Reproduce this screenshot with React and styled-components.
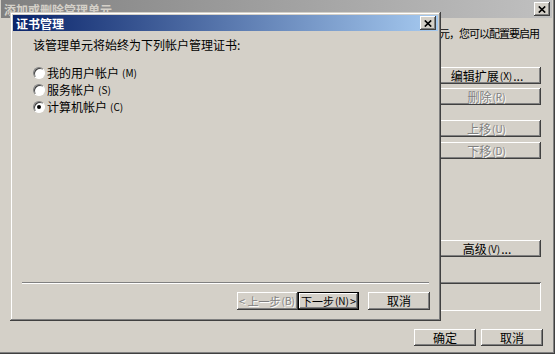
import React from 'react';
import styled, { createGlobalStyle, css } from 'styled-components';

const GlobalStyle = createGlobalStyle`
  html, body {
    margin: 0;
    padding: 0;
    background: #fff;
  }
  body {
    font-family: "Noto Sans CJK SC", "Liberation Sans", sans-serif;
    font-size: 12px;
    color: #000;
  }
`;

const frameEdge = css`
  box-shadow: inset -1px -1px #404040, inset 1px 1px #d4d0c8,
    inset -2px -2px #808080, inset 2px 2px #fff;
`;
const buttonEdge = css`
  box-shadow: inset -1px -1px #404040, inset 1px 1px #fff,
    inset -2px -2px #808080, inset 2px 2px #d4d0c8;
`;
const sunkenEdge = css`
  box-shadow: inset 1px 1px #808080, inset -1px -1px #fff,
    inset 2px 2px #404040, inset -2px -2px #d4d0c8;
`;

const Desktop = styled.div`
  position: relative;
  width: 557px;
  height: 357px;
  overflow: hidden;
`;

const Window = styled.div`
  position: absolute;
  left: ${({ $x }) => $x}px;
  top: ${({ $y }) => $y}px;
  width: ${({ $w }) => $w}px;
  height: ${({ $h }) => $h}px;
  box-sizing: border-box;
  padding: 3px;
  background: #d4d0c8;
  display: flex;
  flex-direction: column;
  ${frameEdge}
`;

const TitleBar = styled.div`
  height: ${({ $h }) => $h}px;
  flex: none;
  display: flex;
  align-items: center;
  padding: 0 2px 0 3px;
  font-weight: bold;
  font-size: 12px;
  ${({ $active }) =>
    $active
      ? css`
          background: linear-gradient(to right, #0a246a, #a6caf0);
          color: #fff;
        `
      : css`
          background: linear-gradient(to right, #808080, #c0c0c0);
          color: #d4d0c8;
        `}
`;

const TitleText = styled.div`
  flex: 1;
  white-space: nowrap;
  line-height: 13px;
`;

const CloseButton = styled.div`
  width: 16px;
  height: 14px;
  background: #d4d0c8;
  display: flex;
  align-items: center;
  justify-content: center;
  ${buttonEdge}
`;

const CloseGlyph = () => (
  <svg width="8" height="7" viewBox="0 0 8 7">
    <path d="M0.8 0.5 L7.2 6.5 M7.2 0.5 L0.8 6.5" stroke="#000" strokeWidth="1.7" fill="none" />
  </svg>
);

/* mnemonic such as (M): drawn smaller than the Chinese label */
const Key = styled.span`
  font-size: 10px;
  margin: 0 1px;
`;

const Button = styled.div`
  width: ${({ $w }) => $w}px;
  height: ${({ $h }) => $h || 18}px;
  margin-top: ${({ $mt }) => $mt || 0}px;
  margin-left: ${({ $ml }) => $ml || 0}px;
  flex: none;
  box-sizing: border-box;
  background: #d4d0c8;
  display: flex;
  align-items: center;
  justify-content: center;
  white-space: nowrap;
  font-size: ${({ $fs }) => $fs || 12}px;
  line-height: 12px;
  ${buttonEdge}
  ${({ $default }) =>
    $default &&
    css`
      box-shadow: inset 0 0 0 1px #000, inset -2px -2px #404040,
        inset 2px 2px #fff, inset -3px -3px #808080;
    `}
  ${({ $disabled }) =>
    $disabled &&
    css`
      color: #808080;
      text-shadow: 1px 1px #fff;
    `}
`;

/* ---------- back window: 添加或删除管理单元 ---------- */

const SnapinBody = styled.div`
  flex: 1;
  display: flex;
  flex-direction: column;
  padding: 8px 11px 5px 12px;
`;

const Intro = styled.div`
  height: 28px;
  line-height: 14px;
  padding-right: 2px;
  white-space: nowrap;
  font-size: 11px;
  letter-spacing: -1px;
  text-align: right;
`;

const MainRow = styled.div`
  display: flex;
  margin-top: 13px;
  gap: 8px;
`;

const ListBox = styled.div`
  flex: 1;
  background: #fff;
  ${sunkenEdge}
`;

const ButtonColumn = styled.div`
  width: 108px;
  display: flex;
  flex-direction: column;
`;

const InfoBox = styled.div`
  height: 29px;
  margin-top: 25px;
  ${sunkenEdge}
`;

const DialogButtons = styled.div`
  display: flex;
  justify-content: flex-end;
  gap: 5px;
  margin-top: 18px;
  margin-right: -2px;
`;

/* ---------- front dialog: 证书管理 ---------- */

const WizardBody = styled.div`
  flex: 1;
  padding: 7px 0 0 20px;
  display: flex;
  flex-direction: column;
`;

const Prompt = styled.div`
  line-height: 14px;
  white-space: nowrap;
`;

const RadioList = styled.div`
  margin-top: 12px;
  display: flex;
  flex-direction: column;
`;

const RadioRow = styled.div`
  height: 17px;
  display: flex;
  align-items: center;
  gap: 2px;
  white-space: nowrap;
`;

const RadioCircle = styled.span`
  width: 12px;
  height: 12px;
  flex: none;
  box-sizing: border-box;
  border-radius: 50%;
  background: #fff;
  border: 1px solid;
  border-color: #808080 #fff #fff #808080;
  box-shadow: inset 1px 1px #404040;
  display: flex;
  align-items: center;
  justify-content: center;
  ${({ $checked }) =>
    $checked &&
    css`
      &::after {
        content: '';
        width: 4px;
        height: 4px;
        border-radius: 50%;
        background: #000;
      }
    `}
`;

const Separator = styled.div`
  margin: 0 9px;
  border-top: 1px solid #808080;
  border-bottom: 1px solid #fff;
`;

const WizardButtons = styled.div`
  display: flex;
  justify-content: flex-end;
  padding: 8px 8px 8px 0;
`;

const accounts = [
  { label: '我的用户帐户', key: 'M', checked: false },
  { label: '服务帐户', key: 'S', checked: false },
  { label: '计算机帐户', key: 'C', checked: true },
];

const App = () => (
  <Desktop>
    <GlobalStyle />
    <Window $x={-2} $y={-3} $w={557} $h={357}>
      <TitleBar $h={18}>
        <TitleText>添加或删除管理单元</TitleText>
        <CloseButton>
          <CloseGlyph />
        </CloseButton>
      </TitleBar>
      <SnapinBody>
        <Intro>对于可扩展的管理单元，您可以配置要启用</Intro>
        <MainRow>
          <ListBox />
          <ListBox />
          <ButtonColumn>
            <Button $w={108} $h={17}>编辑扩展<Key>(X)</Key>...</Button>
            <Button $w={108} $h={17} $mt={4} $disabled>删除<Key>(R)</Key></Button>
            <Button $w={108} $h={17} $mt={15} $disabled>上移<Key>(U)</Key></Button>
            <Button $w={108} $h={17} $mt={5} $disabled>下移<Key>(D)</Key></Button>
            <Button $w={108} $h={17} $mt={81}>高级<Key>(V)</Key>...</Button>
          </ButtonColumn>
        </MainRow>
        <InfoBox />
        <DialogButtons>
          <Button $w={62} $h={17}>确定</Button>
          <Button $w={62} $h={17}>取消</Button>
        </DialogButtons>
      </SnapinBody>
    </Window>

    <Window $x={10} $y={12} $w={431} $h={309}>
      <TitleBar $active $h={16}>
        <TitleText>证书管理</TitleText>
        <CloseButton>
          <CloseGlyph />
        </CloseButton>
      </TitleBar>
      <WizardBody>
        <Prompt>该管理单元将始终为下列帐户管理证书:</Prompt>
        <RadioList>
          {accounts.map((a) => (
            <RadioRow key={a.key}>
              <RadioCircle $checked={a.checked} />
              {a.label}
              <Key>({a.key})</Key>
            </RadioRow>
          ))}
        </RadioList>
      </WizardBody>
      <Separator />
      <WizardButtons>
        <Button $w={61} $fs={11} $disabled>&lt; 上一步<Key>(B)</Key></Button>
        <Button $w={61} $fs={11} $default>下一步<Key>(N)</Key> &gt;</Button>
        <Button $w={62} $ml={9}>取消</Button>
      </WizardButtons>
    </Window>
  </Desktop>
);

export default App;
